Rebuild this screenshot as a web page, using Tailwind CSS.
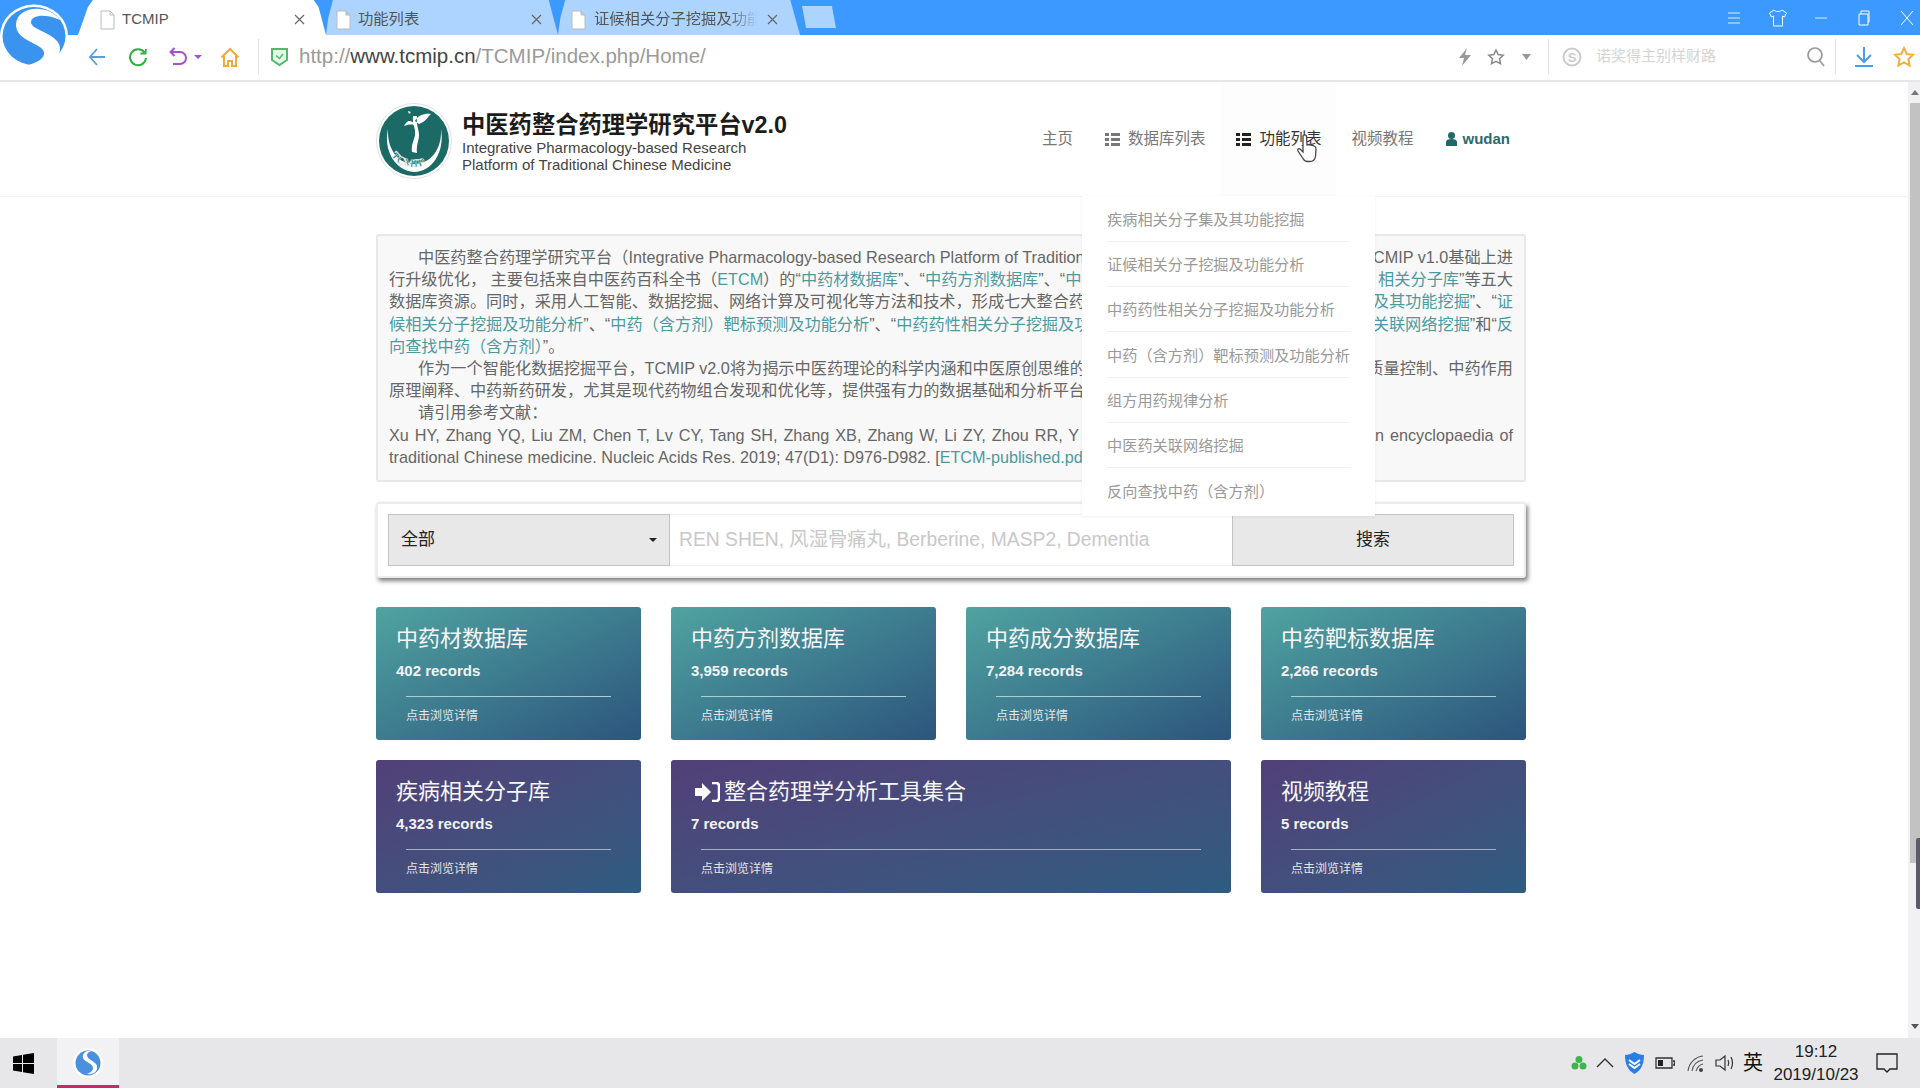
<!DOCTYPE html>
<html lang="zh">
<head>
<meta charset="utf-8">
<title>TCMIP</title>
<script src="https://cdn.jsdelivr.net/npm/@tailwindcss/browser@4"></script>
</head>
<body class="m-0 h-[1088px] w-[1920px] overflow-hidden bg-white font-['Liberation_Sans','Noto_Sans_CJK_SC',sans-serif] text-[#555]">
<div class="relative flex h-[1088px] w-[1920px] flex-col">

  <!-- browser logo -->
  <svg class="absolute left-0 top-0 z-20" width="72" height="70" viewBox="0 0 72 70">
    <ellipse cx="34" cy="36" rx="34" ry="31.500" fill="#fff"/>
    <ellipse cx="34" cy="36" rx="31.500" ry="29" fill="#3b93f0"/>
    <path d="M60 20C48 3 17 6 16 24 15 41 42 43 44 52 45 58 38 62 29 65 50 69 64 56 59 44 53 32 31 30 31 22 31 15 46 13 60 20Z" fill="#fff"/>
  </svg>

  <!-- title bar -->
  <div class="flex h-[35px] shrink-0 items-end bg-[#3b99ff] pl-[78px]">
    <div class="flex h-[35px] w-[248px] items-center bg-white pl-[22px] pr-[21px] pt-[4px] [clip-path:polygon(0_100%,2%_60%,4%_20%,6%_0,95%_0,97%_20%,98.500%_60%,100%_100%)]">
      <svg width="15" height="20" viewBox="0 0 15 20" class="mr-[7px] shrink-0"><path d="M1 1h9l4 4v14H1zM10 1v4h4" fill="#fff" stroke="#bbb"/></svg>
      <span class="flex-1 text-[15px] text-[#555]">TCMIP</span>
      <svg width="11" height="11" viewBox="0 0 11 11" stroke="#666" stroke-width="1.200"><path d="m1 1 9 9M10 1l-9 9"/></svg>
    </div>
    <div class="flex h-[35px] w-[232px] items-center bg-[#add4ff] pl-[10px] pr-[16px] pt-[4px] [clip-path:polygon(0_100%,1%_50%,3%_0,96%_0,98%_50%,100%_100%)]">
      <svg width="15" height="20" viewBox="0 0 15 20" class="mr-[7px] shrink-0"><path d="M1 1h9l4 4v14H1zM10 1v4h4" fill="#fff" stroke="#bbb"/></svg>
      <span class="flex-1 text-[15.300px] text-[#555]">功能列表</span>
      <svg width="11" height="11" viewBox="0 0 11 11" stroke="#666" stroke-width="1.200"><path d="m1 1 9 9M10 1l-9 9"/></svg>
    </div>
    <div class="flex h-[35px] w-[242px] items-center bg-[#add4ff] pl-[13px] pr-[22px] pt-[4px] [clip-path:polygon(0_100%,1%_50%,3%_0,96%_0,98%_50%,100%_100%)]">
      <svg width="15" height="20" viewBox="0 0 15 20" class="mr-[8px] shrink-0"><path d="M1 1h9l4 4v14H1zM10 1v4h4" fill="#fff" stroke="#bbb"/></svg>
      <span class="w-[164px] overflow-hidden whitespace-nowrap text-[15.300px] text-[#555] [mask-image:linear-gradient(90deg,#000_82%,transparent)]">证候相关分子挖掘及功能</span>
      <svg class="ml-auto" width="11" height="11" viewBox="0 0 11 11" stroke="#666" stroke-width="1.200"><path d="m1 1 9 9M10 1l-9 9"/></svg>
    </div>
    <div class="mb-[7px] ml-[2px] h-[22px] w-[34px] bg-[#add4ff] [clip-path:polygon(0_0,88%_0,100%_100%,12%_100%)]"></div>
    <div class="ml-auto mr-[5px] flex h-[35px] items-center text-white">
      <svg class="mr-[26px]" width="16" height="16" viewBox="0 0 16 16" stroke="#dcecff" fill="none"><path d="M2 3h12M2 8h12M2 13h12"/></svg>
      <svg class="mr-[25px]" width="20" height="20" viewBox="0 0 20 20" stroke="#fff" fill="none"><path d="M6 2 1.500 5l2 4 2-1v10h9V8l2 1 2-4L14 2c-1 2-7 2-8 0z"/></svg>
      <svg class="mr-[27px]" width="16" height="16" viewBox="0 0 16 16" stroke="#dcecff" fill="none"><path d="M2 8h12"/></svg>
      <svg class="mr-[27px]" width="16" height="18" viewBox="0 0 16 18" stroke="#fff" fill="none"><path d="M3 5h9v11H3zM5 5V2h8v11h-1"/></svg>
      <svg width="16" height="18" viewBox="0 0 16 18" stroke="#fff" fill="none"><path d="m2 2 12 14M14 2 2 16"/></svg>
    </div>
  </div>

  <!-- toolbar -->
  <div class="flex h-[47px] shrink-0 items-center border-b-2 border-[#e6e6e6] bg-white pb-[2px] pl-[88px] pr-[5px]">
    <svg width="18" height="20" viewBox="0 0 18 20" fill="none" stroke="#5b9be0" stroke-width="1.800"><path d="M17 10H2M9 2l-7 8 7 8"/></svg>
    <svg class="ml-[22px]" width="20" height="20" viewBox="0 0 20 20" fill="none" stroke="#2fae3c" stroke-width="2"><path d="M16.500 5.500A8 8 0 1 0 18 11"/><path d="m12.500 6.500 5 0 .5-4.500" stroke-width="1.800"/></svg>
    <svg class="ml-[20px]" width="20" height="20" viewBox="0 0 20 20" fill="none" stroke="#a550cf" stroke-width="2"><path d="M3 5h9a5.500 5.500 0 0 1 0 12H5M6.500 1 2.500 5l4 4"/></svg>
    <svg class="ml-[6px]" width="8" height="6" viewBox="0 0 8 6" fill="#a550cf"><path d="M0 1h8L4 5z"/></svg>
    <svg class="ml-[18px]" width="20" height="20" viewBox="0 0 20 20" fill="none" stroke="#eeaa3c" stroke-width="2"><path d="M1.500 10.500 10 2l8.500 8.500M4 9v10h4v-5h4v5h4V9"/></svg>
    <div class="ml-[18px] h-[35px] w-px bg-[#e2e2e2]"></div>
    <svg class="ml-[11px]" width="19" height="20" viewBox="0 0 19 20" fill="none"><path d="M2 2h15v11l-7.500 5L2 13z" fill="#e6f6ea" stroke="#52b96c" stroke-width="2"/><path d="m6 8.500 3.500 3L13 7" stroke="#52b96c" stroke-width="1.500"/></svg>
    <div class="ml-[10px] whitespace-nowrap text-[20.500px] text-[#9a9a9a]">http://<span class="text-[#444]">www.tcmip.cn</span>/TCMIP/index.php/Home/</div>

    <svg class="ml-auto" width="14" height="20" viewBox="0 0 14 20" fill="#999"><path d="M9 1 1 11h5l-2 8 9-11H7z"/></svg>
    <svg class="ml-[15px]" width="18" height="18" viewBox="0 0 18 18" fill="none" stroke="#888" stroke-width="1.500"><path d="m9 2 2.200 4.600 5 .6-3.700 3.500 1 5L9 13.300l-4.500 2.400 1-5L1.800 7.200l5-.6z"/></svg>
    <svg class="ml-[17px]" width="9" height="6" viewBox="0 0 9 6" fill="#999"><path d="M0 0h9L4.500 6z"/></svg>
    <div class="ml-[17px] h-[35px] w-px bg-[#e2e2e2]"></div>
    <svg class="ml-[13px]" width="20" height="20" viewBox="0 0 20 20" fill="none"><circle cx="10" cy="10" r="8.500" stroke="#ccc" stroke-width="2"/><text x="10" y="15" text-anchor="middle" font-size="13" font-weight="700" fill="#ccc" font-family="Liberation Sans">S</text></svg>
    <div class="ml-[14px] w-[211px] whitespace-nowrap text-[15px] text-[#d4d4d4]">诺奖得主别样财路</div>
    <svg class="-ml-[1px]" width="20" height="22" viewBox="0 0 20 22" fill="none" stroke="#999" stroke-width="1.700"><circle cx="9" cy="9" r="7"/><path d="m14 15 4 5"/></svg>
    <div class="ml-[9px] h-[35px] w-px bg-[#e2e2e2]"></div>
    <svg class="ml-[18px]" width="20" height="22" viewBox="0 0 20 22" fill="none" stroke="#4f9be8" stroke-width="2"><path d="M10 1v14M3 9l7 7 7-7M1 20h18"/></svg>
    <svg class="ml-[19px]" width="22" height="22" viewBox="0 0 22 22" fill="none" stroke="#f0b03c" stroke-width="2"><path d="m11 2 2.800 6 6.200.7-4.600 4.400 1.200 6.400L11 16.400l-5.600 3.100 1.200-6.400L2 8.700 8.200 8z"/></svg>
  </div>

  <!-- page -->
  <div class="relative flex min-h-0 flex-1">
    <div class="relative min-w-0 flex-1">
      <!-- header -->
      <div class="h-[115px] border-b border-[#f1f1f1]">
        <div class="ml-[376px] flex h-[114px] w-[1150px] items-center">
          <svg width="76" height="76" viewBox="0 0 76 76" class="mt-[4px] shrink-0">
            <circle cx="38" cy="38" r="37.500" fill="#fff" stroke="#d8e4e2"/>
            <circle cx="38" cy="38" r="35" fill="#1c6a66"/>
            <path d="M12 26c-5 22 8 42 26 43 18 0 31-20 27-43 1 20-10 35-27 35C22 61 11 46 12 26z" fill="#fff"/>
            <path d="M37 13c-1 9 3 12 2 19-1 6-4 9-3 17l5 1c-1-8 2-12 2-18 0-6-3-9-2-19zM39 18c3-6 10-8 16-7-3 2-4 7-12 10zM38 20c-4-3-7-3-10 3 3-1 6-2 10-1zM32 8l3 1-2 2z" fill="#fff"/>
            <path id="logo-arc" d="M11 41C14 60 28 64 38 64c12 0 23-6 27-23" fill="none"/>
            <text font-size="11" font-weight="700" fill="#1c6a66" stroke="#fff" stroke-width="0.500" font-family="Liberation Serif" letter-spacing="0.500"><textPath href="#logo-arc" startOffset="12">TCMIP</textPath></text>
          </svg>
          <div class="ml-[10px] mt-[6px]">
            <div class="whitespace-nowrap text-[23.300px] font-bold leading-[27px] text-[#1c1c1c]">中医药整合药理学研究平台v2.0</div>
            <div class="whitespace-nowrap text-[15px] leading-[17px] text-[#444]">Integrative Pharmacology-based Research<br>Platform of Traditional Chinese Medicine</div>
          </div>
          <nav class="ml-auto mr-[16px] flex h-[114px] items-center text-[15.500px]">
            <span class="text-[#777]">主页</span>
            <span class="ml-[32px] flex items-center text-[#777]">
              <svg width="15" height="13" viewBox="0 0 15 13" fill="#777" class="mr-[8px]"><path d="M0 0h4v3H0zM6 0h9v3H6zM0 5h4v3H0zM6 5h9v3H6zM0 10h4v3H0zM6 10h9v3H6z"/></svg>数据库列表
            </span>
            <span class="ml-[16px] flex h-[114px] items-center bg-[#fdfdfd] pl-[15px] pr-[15px] text-[#333]">
              <svg width="15" height="13" viewBox="0 0 15 13" fill="#222" class="mr-[8px]"><path d="M0 0h4v3H0zM6 0h9v3H6zM0 5h4v3H0zM6 5h9v3H6zM0 10h4v3H0zM6 10h9v3H6z"/></svg>功能列表
            </span>
            <span class="ml-[15px] text-[#777]">视频教程</span>
            <span class="ml-[32px] flex items-center font-bold text-[#2a6b6b]">
              <svg width="11" height="14" viewBox="0 0 11 14" fill="#1e6a66" class="mr-[6px]"><circle cx="5.500" cy="3.500" r="3.500"/><path d="M0 14V10c0-2 2-3 5.500-3s5.500 1 5.500 3v4z"/></svg><span class="text-[15px]">wudan</span>
            </span>
          </nav>
        </div>
      </div>

      <main class="ml-[376px] w-[1150px]">
        <!-- intro -->
        <div class="mt-[37px] h-[248px] rounded-[3px] border-2 border-[#e8e8e8] bg-[#f8f8f9] px-[11px] pt-[10px] text-[16.200px] leading-[22.200px] text-[#666]">
          <div class="flex justify-between whitespace-nowrap"><span class="pl-[29px]">中医药整合药理学研究平台（Integrative Pharmacology-based Research Platform of Tradition</span><span>TCMIP v1.0基础上进</span></div>
          <div class="flex justify-between whitespace-nowrap"><span>行升级优化， 主要包括来自中医药百科全书（<span class="text-[#4d9a9e]">ETCM</span>）的“<span class="text-[#4d9a9e]">中药材数据库</span>”、“<span class="text-[#4d9a9e]">中药方剂数据库</span>”、“<span class="text-[#4d9a9e]">中</span></span><span><span class="text-[#4d9a9e]">相关分子库</span>”等五大</span></div>
          <div class="flex justify-between whitespace-nowrap"><span>数据库资源。同时，采用人工智能、数据挖掘、网络计算及可视化等方法和技术，形成七大整合药</span><span><span class="text-[#4d9a9e]">及其功能挖掘</span>”、“<span class="text-[#4d9a9e]">证</span></span></div>
          <div class="flex justify-between whitespace-nowrap text-[#4d9a9e]"><span>候相关分子挖掘及功能分析<span class="text-[#666]">”、“</span>中药（含方剂）靶标预测及功能分析<span class="text-[#666]">”、“</span>中药药性相关分子挖掘及功</span><span>关联网络挖掘<span class="text-[#666]">”和“</span>反</span></div>
          <div class="whitespace-nowrap"><span class="text-[#4d9a9e]">向查找中药（含方剂）</span>”。</div>
          <div class="flex justify-between whitespace-nowrap"><span class="pl-[29px]">作为一个智能化数据挖掘平台，TCMIP v2.0将为揭示中医药理论的科学内涵和中医原创思维的</span><span>质量控制、中药作用</span></div>
          <div class="whitespace-nowrap">原理阐释、中药新药研发，尤其是现代药物组合发现和优化等，提供强有力的数据基础和分析平台。</div>
          <div class="whitespace-nowrap pl-[29px]">请引用参考文献：</div>
          <div class="flex justify-between whitespace-nowrap [word-spacing:1.500px]"><span>Xu HY, Zhang YQ, Liu ZM, Chen T, Lv CY, Tang SH, Zhang XB, Zhang W, Li ZY, Zhou RR, Y</span><span>an encyclopaedia of</span></div>
          <div class="whitespace-nowrap">traditional Chinese medicine. Nucleic Acids Res. 2019; 47(D1): D976-D982. [<span class="text-[#4d9a9e]">ETCM-published.pdf</span>]</div>
        </div>

        <!-- search -->
        <div class="mt-[20px] flex h-[76px] items-center rounded-[3px] border-2 border-[#ececec] bg-white px-[10px] shadow-[2px_3px_4px_rgba(0,0,0,0.5)]">
          <div class="flex h-[52px] w-[282px] shrink-0 items-center justify-between border border-[#c4c4c4] bg-[#e8e8e8] px-[12px] text-[17px] text-[#222]">全部<span class="h-0 w-0 border-x-[4px] border-t-[4px] border-x-transparent border-t-[#222]"></span></div>
          <div class="flex h-[52px] min-w-0 flex-1 items-center whitespace-nowrap border-y border-[#f2f2f2] pl-[9px] text-[19.300px] text-[#c8c8c8]">REN SHEN, 风湿骨痛丸, Berberine, MASP2, Dementia</div>
          <div class="flex h-[52px] w-[282px] shrink-0 items-center justify-center border border-[#c4c4c4] bg-[#e8e8e8] text-[17px] text-[#222]">搜索</div>
        </div>

        <!-- cards -->
        <div class="mt-[29px] grid grid-cols-4 gap-x-[30px] gap-y-[20px] text-white">
          <div class="h-[133px] rounded-[3px] bg-gradient-to-br from-[#50a3a0] to-[#2d557c] px-[20px] pt-[18px]">
            <div class="whitespace-nowrap text-[22px] leading-[28px] text-[#f6f6f6]">中药材数据库</div>
            <div class="mt-[7px] text-[15px] font-bold leading-[22px] text-[#f2f2f2]">402 records</div>
            <div class="mx-[10px] mt-[14px] h-px bg-[#a9d0d8]"></div>
            <div class="ml-[10px] mt-[11px] text-[12px] leading-[16px] text-[#e6e6e6]">点击浏览详情</div>
          </div>
          <div class="h-[133px] rounded-[3px] bg-gradient-to-br from-[#50a3a0] to-[#2d557c] px-[20px] pt-[18px]">
            <div class="whitespace-nowrap text-[22px] leading-[28px] text-[#f6f6f6]">中药方剂数据库</div>
            <div class="mt-[7px] text-[15px] font-bold leading-[22px] text-[#f2f2f2]">3,959 records</div>
            <div class="mx-[10px] mt-[14px] h-px bg-[#a9d0d8]"></div>
            <div class="ml-[10px] mt-[11px] text-[12px] leading-[16px] text-[#e6e6e6]">点击浏览详情</div>
          </div>
          <div class="h-[133px] rounded-[3px] bg-gradient-to-br from-[#50a3a0] to-[#2d557c] px-[20px] pt-[18px]">
            <div class="whitespace-nowrap text-[22px] leading-[28px] text-[#f6f6f6]">中药成分数据库</div>
            <div class="mt-[7px] text-[15px] font-bold leading-[22px] text-[#f2f2f2]">7,284 records</div>
            <div class="mx-[10px] mt-[14px] h-px bg-[#a9d0d8]"></div>
            <div class="ml-[10px] mt-[11px] text-[12px] leading-[16px] text-[#e6e6e6]">点击浏览详情</div>
          </div>
          <div class="h-[133px] rounded-[3px] bg-gradient-to-br from-[#50a3a0] to-[#2d557c] px-[20px] pt-[18px]">
            <div class="whitespace-nowrap text-[22px] leading-[28px] text-[#f6f6f6]">中药靶标数据库</div>
            <div class="mt-[7px] text-[15px] font-bold leading-[22px] text-[#f2f2f2]">2,266 records</div>
            <div class="mx-[10px] mt-[14px] h-px bg-[#a9d0d8]"></div>
            <div class="ml-[10px] mt-[11px] text-[12px] leading-[16px] text-[#e6e6e6]">点击浏览详情</div>
          </div>
          <div class="h-[133px] rounded-[3px] bg-gradient-to-br from-[#514078] to-[#2e5c80] px-[20px] pt-[18px]">
            <div class="whitespace-nowrap text-[22px] leading-[28px] text-[#f6f6f6]">疾病相关分子库</div>
            <div class="mt-[7px] text-[15px] font-bold leading-[22px] text-[#f2f2f2]">4,323 records</div>
            <div class="mx-[10px] mt-[14px] h-px bg-[#a3afc8]"></div>
            <div class="ml-[10px] mt-[11px] text-[12px] leading-[16px] text-[#e6e6e6]">点击浏览详情</div>
          </div>
          <div class="col-span-2 h-[133px] rounded-[3px] bg-gradient-to-br from-[#514078] to-[#2e5c80] px-[20px] pt-[18px]">
            <div class="flex items-center whitespace-nowrap text-[22px] leading-[28px] text-[#f6f6f6]">
              <svg class="ml-[4px] mr-[4px]" width="25" height="20" viewBox="0 0 25 20"><path d="M0 6h7V1l9 9-9 9v-5H0z" fill="#fff"/><path d="M17 1h4q3 0 3 3v12q0 3-3 3h-4" fill="none" stroke="#fff" stroke-width="2.500"/></svg>整合药理学分析工具集合
            </div>
            <div class="mt-[7px] text-[15px] font-bold leading-[22px] text-[#f2f2f2]">7 records</div>
            <div class="mx-[10px] mt-[14px] h-px bg-[#a3afc8]"></div>
            <div class="ml-[10px] mt-[11px] text-[12px] leading-[16px] text-[#e6e6e6]">点击浏览详情</div>
          </div>
          <div class="h-[133px] rounded-[3px] bg-gradient-to-br from-[#514078] to-[#2e5c80] px-[20px] pt-[18px]">
            <div class="whitespace-nowrap text-[22px] leading-[28px] text-[#f6f6f6]">视频教程</div>
            <div class="mt-[7px] text-[15px] font-bold leading-[22px] text-[#f2f2f2]">5 records</div>
            <div class="mx-[10px] mt-[14px] h-px bg-[#a3afc8]"></div>
            <div class="ml-[10px] mt-[11px] text-[12px] leading-[16px] text-[#e6e6e6]">点击浏览详情</div>
          </div>
        </div>
      </main>

      <!-- dropdown -->
      <div class="absolute left-[1082px] top-[114px] z-10 h-[320px] w-[293px] bg-white px-[25px] text-[15.200px] text-[#999] shadow-[0_1px_3px_rgba(0,0,0,0.06)]">
        <div class="flex h-[46px] items-center whitespace-nowrap border-b border-[#f0f0f0] pt-[3px]">疾病相关分子集及其功能挖掘</div>
        <div class="flex h-[45px] items-center whitespace-nowrap border-b border-[#f0f0f0] pt-[3px]">证候相关分子挖掘及功能分析</div>
        <div class="flex h-[45px] items-center whitespace-nowrap border-b border-[#f0f0f0] pt-[3px]">中药药性相关分子挖掘及功能分析</div>
        <div class="flex h-[46px] items-center whitespace-nowrap border-b border-[#f0f0f0] pt-[3px]">中药（含方剂）靶标预测及功能分析</div>
        <div class="flex h-[45px] items-center whitespace-nowrap border-b border-[#f0f0f0] pt-[3px]">组方用药规律分析</div>
        <div class="flex h-[45px] items-center whitespace-nowrap border-b border-[#f0f0f0] pt-[3px]">中医药关联网络挖掘</div>
        <div class="flex h-[46px] items-center whitespace-nowrap pt-[3px]">反向查找中药（含方剂）</div>
      </div>

      <!-- cursor -->
      <svg class="absolute left-[1296px] top-[52px] z-20" width="24" height="30" viewBox="0 0 24 30" fill="#fff" stroke="#444" stroke-width="1.300"><path d="M7 2c1-1.500 3-1.500 3.500 0L11 11l2-.5 2 .5 2 .5 2 1c1 .5 1 2 1 3l-.5 7c-.5 3-3 5-6 5h-2c-2 0-3.500-1-4.500-3L2 17c-1-2 1-3 2-2l3 3z"/></svg>
    </div>

    <!-- scrollbar -->
    <div class="relative flex w-[12px] shrink-0 flex-col bg-[#f1f0f3]">
      <div class="flex h-[21px] items-center justify-center pl-[2px]"><span class="h-0 w-0 border-x-[4px] border-b-[5px] border-x-transparent border-b-[#777]"></span></div>
      <div class="ml-[2px] h-[760px] bg-[#c2c2c2]"></div>
      <div class="flex-1"></div>
      <div class="flex h-[22px] items-end justify-center pb-[9px] pl-[2px]"><span class="h-0 w-0 border-x-[4px] border-t-[5px] border-x-transparent border-t-[#555]"></span></div>
      <div class="absolute right-0 top-[756px] h-[71px] w-[4px] rounded-l-[2px] bg-[#5a5a68]"></div>
    </div>
  </div>

  <!-- taskbar -->
  <div class="flex h-[50px] shrink-0 items-center bg-[#e7e7ea]">
    <svg class="ml-[13px]" width="21" height="21" viewBox="0 0 21 21" fill="#000"><path d="M0 3.500 9 2v8H0zM10 1.800 21 0v10H10zM0 11h9v8L0 17.500zM10 11h11v10l-11-1.800z"/></svg>
    <div class="relative ml-[23px] flex h-[50px] w-[62px] items-center justify-center bg-[#f2f2f5]">
      <svg width="30" height="30" viewBox="0 0 30 30"><circle cx="15" cy="15" r="15" fill="#fff"/><circle cx="15" cy="15" r="12.500" fill="#4a8fe0"/><path d="M20 3c-8-1-11 3-10 7 1 4 10 5 10 10 0 3-3 5-6 6 7 1 11-3 10-8-1-5-10-6-10-11 0-2 3-4 6-4z" fill="#fff"/></svg>
      <div class="absolute inset-x-0 bottom-0 h-[3px] bg-[#c9286a]"></div>
    </div>
    <div class="ml-auto flex items-center">
      <svg width="16" height="16" viewBox="0 0 16 16" fill="#3fb44e"><circle cx="8" cy="4.500" r="3.500"/><circle cx="4" cy="11" r="3.500"/><circle cx="12" cy="11" r="3.500"/></svg>
      <svg class="ml-[9px]" width="18" height="10" viewBox="0 0 18 10" fill="none" stroke="#333" stroke-width="1.400"><path d="m1 9 8-8 8 8"/></svg>
      <svg class="ml-[10px]" width="21" height="22" viewBox="0 0 21 22" fill="#2a7fe6"><path d="M10.500 0C7 2 4 3 1 3c0 8 2 15 9.500 19C18 18 20 11 20 3c-3 0-6.500-1-9.500-3z"/><path d="m5 8 5.500 4L16 8M5 12l5.500 4 5.500-4" fill="none" stroke="#fff" stroke-width="2"/></svg>
      <svg class="ml-[10px]" width="20" height="12" viewBox="0 0 20 12" fill="none" stroke="#333" stroke-width="1.300"><path d="M1 1h16v10H1z"/><path d="M18 4h1.500v4H18"/><path d="M3 3h5v6H3z" fill="#222" stroke="none"/></svg>
      <svg class="ml-[12px]" width="18" height="18" viewBox="0 0 18 18" fill="none" stroke="#555" stroke-width="1.100"><path d="M1 17C2 9 8 3 16 2M5 17C6 11 10 7 16 6M9 17c1-3 3-6 7-7"/><circle cx="14" cy="16" r="1.500" fill="#333"/></svg>
      <svg class="ml-[10px]" width="20" height="18" viewBox="0 0 20 18" fill="none" stroke="#333" stroke-width="1.200"><path d="M1 6h4l5-4v14l-5-4H1zM13 6c1 2 1 4 0 6M16 3c2 4 2 8 0 12"/></svg>
      <div class="ml-[8px] text-[20px] text-[#111]">英</div>
      <div class="ml-[8px] w-[90px] text-center text-[17px] leading-[23px] text-[#222]">19:12<br>2019/10/23</div>
      <svg class="ml-[15px] mr-[22px]" width="22" height="22" viewBox="0 0 22 22" fill="none" stroke="#222" stroke-width="1.300"><path d="M1 2h20v15h-7l-3 3-3-3H1z"/></svg>
    </div>
  </div>
</div>
</body>
</html>
